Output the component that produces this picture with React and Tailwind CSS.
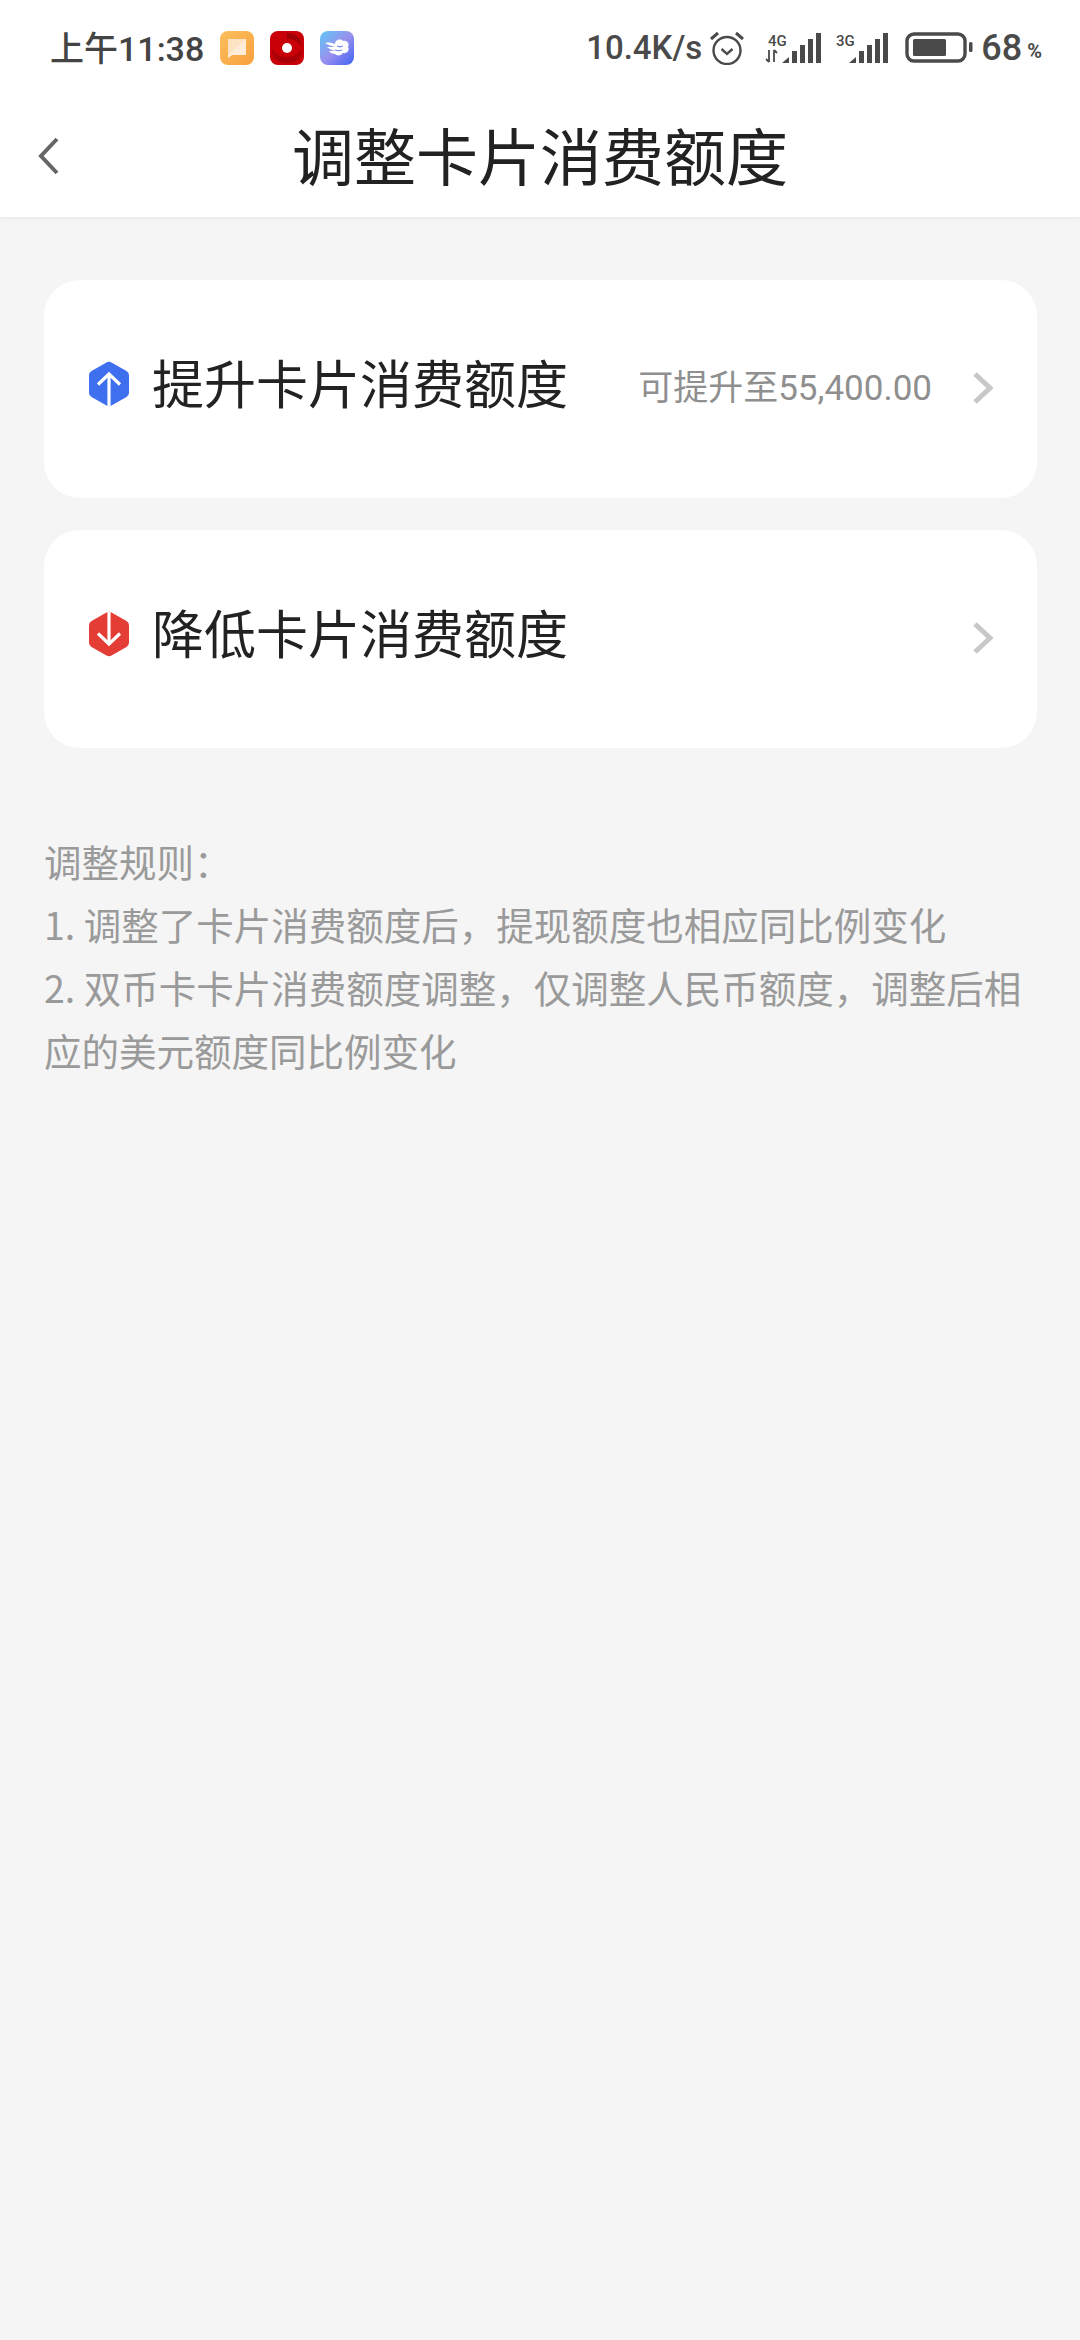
const cjk = '"Noto Sans CJK SC", "Noto Sans", sans-serif';

// 状态栏图标
const NoteIcon = () => (
  <svg width="34" height="34" viewBox="0 0 34 34">
    <defs>
      <linearGradient id="noteBg" x1="0" y1="0" x2="1" y2="1">
        <stop offset="0" stopColor="#fbbf5c" />
        <stop offset="1" stopColor="#f9a03f" />
      </linearGradient>
    </defs>
    <rect width="34" height="34" rx="8" fill="url(#noteBg)" />
    <path d="M8 8h18v16H12l-4 3z" fill="#fde3c4" />
    <path d="M8 27v-3L26 8v16H12z" fill="#fff1e0" opacity="0.7" />
  </svg>
);

const RecordIcon = () => (
  <svg width="34" height="34" viewBox="0 0 34 34">
    <rect width="34" height="34" rx="8" fill="#c90008" />
    <path d="M17 2c9 0 15 6 15 14-4-6-9-8-15-8z" fill="#a00006" />
    <path d="M2 18c4 6 9 8 15 8 6 0 10-2 15-8 0 9-6 14-15 14S2 27 2 18z" fill="#a80006" />
    <circle cx="17" cy="17" r="5" fill="#fff" />
  </svg>
);

const CloudIcon = () => (
  <svg width="34" height="34" viewBox="0 0 34 34">
    <defs>
      <linearGradient id="cloudBg" x1="0" y1="0" x2="1" y2="1">
        <stop offset="0" stopColor="#5cc8f5" />
        <stop offset="0.5" stopColor="#9a90ee" />
        <stop offset="1" stopColor="#3f62f2" />
      </linearGradient>
    </defs>
    <rect width="34" height="34" rx="8" fill="url(#cloudBg)" />
    <path d="M15 13c0-4 5-6 8-3 4-1 7 3 5 6 2 3-1 7-5 6-2 3-6 3-8 1-3 0-5-2-6-3h6c-3-1-6-2-8-4h8c-3-1-7-2-10-4 4-1 7 0 10 1z" fill="#fff" />
    <path d="M17 15c2 1 4 1 6 0M15 19c3 1 5 1 7 0" stroke="#7a8cf0" strokeWidth="1.300" fill="none" />
  </svg>
);

const AlarmIcon = () => (
  <svg width="34" height="34" viewBox="0 0 34 34" fill="none" stroke="#4a4a4a">
    <circle cx="17" cy="19.500" r="13.500" strokeWidth="2.400" />
    <path d="M11.500 18l5.500 5 5.500-5" strokeWidth="2.400" />
    <path d="M1 8l7-6M33 8l-7-6" strokeWidth="3" />
  </svg>
);

const SignalBars = () => (
  <g fill="#4a4a4a">
    <path d="M0 30l7-6v6z" />
    <rect x="10" y="18" width="5" height="12" />
    <rect x="18" y="12" width="5" height="18" />
    <rect x="26" y="6" width="5" height="24" />
    <rect x="34" y="0" width="5" height="30" />
  </g>
);

const Signal4G = () => (
  <svg width="58" height="32" viewBox="0 0 58 32">
    <text x="4" y="14" fontSize="15" fontWeight="500" fill="#4a4a4a" fontFamily="Roboto, sans-serif">4G</text>
    <path d="M5 18v12M2 27l3 3M10 30V18M10 18l3 3" stroke="#4a4a4a" strokeWidth="1.800" fill="none" />
    <g transform="translate(18 1)">
      <SignalBars />
    </g>
  </svg>
);

const Signal3G = () => (
  <svg width="54" height="32" viewBox="0 0 54 32">
    <text x="0" y="14" fontSize="15" fontWeight="500" fill="#4a4a4a" fontFamily="Roboto, sans-serif">3G</text>
    <g transform="translate(13 1)">
      <SignalBars />
    </g>
  </svg>
);

const Battery = () => (
  <svg width="68" height="32" viewBox="0 0 68 32">
    <rect x="2" y="2" width="58" height="27" rx="7" fill="none" stroke="#4a4a4a" strokeWidth="3.400" />
    <rect x="8" y="7" width="33" height="17" rx="1.500" fill="#4a4a4a" />
    <rect x="64" y="10" width="3.500" height="10" rx="1.500" fill="#4a4a4a" />
  </svg>
);

const BackChevron = () => (
  <svg width="22" height="38" viewBox="0 0 22 38" fill="none">
    <path d="M19 2L3 19l16 17" stroke="#666666" strokeWidth="4" />
  </svg>
);

// 六边形箭头
const HexArrow = ({ color, down }) => (
  <svg width="42" height="46" viewBox="0 0 42 46" className="mt-[3px]">
    <path d="M18.500 1.500a5 5 0 0 1 5 0l15 8.500a5 5 0 0 1 2.500 4.300v17.400a5 5 0 0 1-2.500 4.300l-15 8.500a5 5 0 0 1-5 0l-15-8.500A5 5 0 0 1 1 31.700V14.300A5 5 0 0 1 3.500 10z" fill={color} />
    <g stroke="#fff" strokeWidth="3.200" fill="none" transform={down ? 'rotate(180 21 23)' : undefined}>
      <path d="M21 45V13" />
      <path d="M10 23.500L21 13l11 10.500" />
    </g>
  </svg>
);

const RightChevron = () => (
  <svg width="22" height="34" viewBox="0 0 22 34" fill="none" className="mb-[2px] shrink-0">
    <path d="M3 3l15 14L3 31" stroke="#c8c8c8" strokeWidth="5" />
  </svg>
);

function LimitRow({ icon, title, hint }) {
  return (
    <div className="flex h-[218px] items-center rounded-[36px] bg-white pl-[44px] pr-[43px]">
      <div className="mb-[14px] flex items-center">
        {icon}
        <span className="ml-[22px] text-[52px] leading-[60px] text-[#222222]">{title}</span>
      </div>
      <div className="ml-auto flex items-center">
        {hint && (
          <span className="mr-[40px] text-[35px] text-[#8f8f8f]" style={{ fontFamily: `Roboto, ${cjk}` }}>
            {hint}
          </span>
        )}
        <RightChevron />
      </div>
    </div>
  );
}

export default function App() {
  return (
    <main className="flex min-h-[2340px] flex-col bg-[#f5f5f5]" style={{ fontFamily: cjk }}>
      <header className="h-[217px] bg-white shadow-[0_1px_4px_rgba(0,0,0,0.06)]">
        <div className="flex h-[96px] items-center pl-[50px] pr-[38px]">
          <span className="mt-[2px] text-[34px] font-medium text-[#444444]" style={{ fontFamily: `Roboto, ${cjk}` }}>
            上午11:38
          </span>
          <div className="ml-[16px] flex items-center gap-[16px]">
            <NoteIcon />
            <RecordIcon />
            <CloudIcon />
          </div>
          <div className="ml-auto flex items-center">
            <span className="text-[33px] font-medium text-[#4a4a4a]" style={{ fontFamily: 'Roboto, sans-serif' }}>
              10.4K/s
            </span>
            <div className="ml-[8px]"><AlarmIcon /></div>
            <div className="ml-[20px]"><Signal4G /></div>
            <div className="ml-[14px]"><Signal3G /></div>
            <div className="ml-[15px]"><Battery /></div>
            <span className="ml-[8px] text-[36px] font-medium text-[#4a4a4a]" style={{ fontFamily: 'Roboto, sans-serif' }}>
              68
            </span>
            <span className="ml-[5px] mt-[5px] text-[20px] font-bold text-[#4a4a4a]" style={{ fontFamily: 'Roboto, sans-serif' }}>
              %
            </span>
          </div>
        </div>
        <div className="relative flex h-[121px] items-center justify-center pb-[6px]">
          <div className="absolute left-[38px] top-[41px]"><BackChevron /></div>
          <h1 className="text-[62px] font-normal leading-[72px] text-[#222222]">调整卡片消费额度</h1>
        </div>
      </header>

      <section className="mt-[63px] flex flex-col gap-[32px] pl-[44px] pr-[43px]">
        <LimitRow icon={<HexArrow color="#3d6fee" />} title="提升卡片消费额度" hint="可提升至55,400.00" />
        <LimitRow icon={<HexArrow color="#e33d36" down />} title="降低卡片消费额度" />
      </section>

      <section className="mt-[81px] pl-[44px] pr-[40px] text-[37.500px] leading-[63px] text-[#9a9a9a]">
        <p>调整规则：</p>
        <p>1. 调整了卡片消费额度后，提现额度也相应同比例变化</p>
        <p>2. 双币卡卡片消费额度调整，仅调整人民币额度，调整后相应的美元额度同比例变化</p>
      </section>
    </main>
  );
}
